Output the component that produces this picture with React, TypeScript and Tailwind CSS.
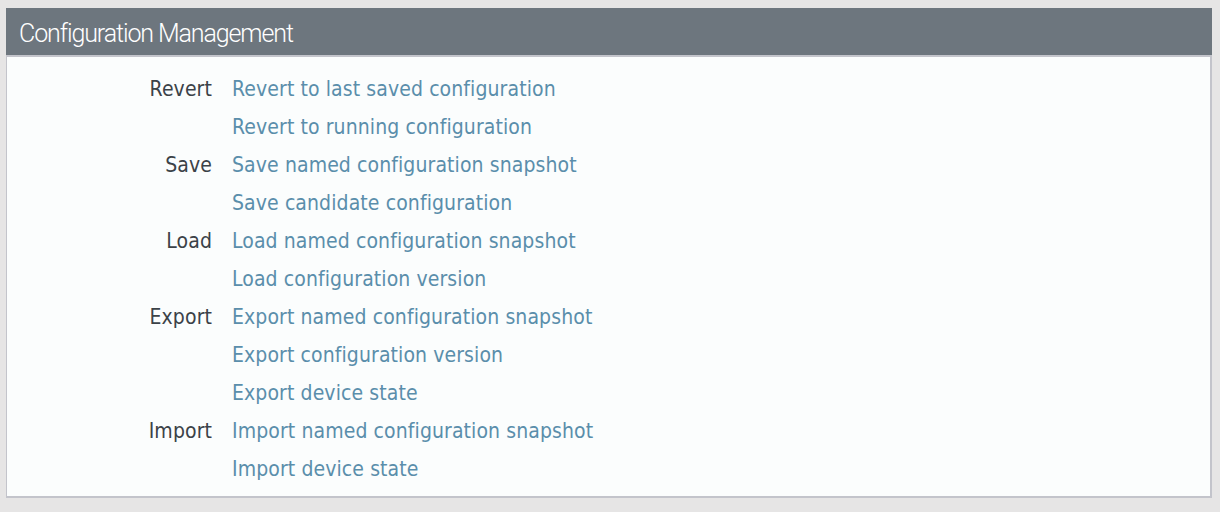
const groups = [
  { label: "Revert", links: ["Revert to last saved configuration", "Revert to running configuration"] },
  { label: "Save", links: ["Save named configuration snapshot", "Save candidate configuration"] },
  { label: "Load", links: ["Load named configuration snapshot", "Load configuration version"] },
  { label: "Export", links: ["Export named configuration snapshot", "Export configuration version", "Export device state"] },
  { label: "Import", links: ["Import named configuration snapshot", "Import device state"] },
];

export default function App() {
  return (
    <div className="min-h-[512px] w-[1220px] bg-[#e6e5e5] pt-2 pl-[6px] pr-2">
      <div className="w-[1206px]">
        <div className="h-[47px] bg-[#6d767e] pl-[13px] pt-[4px] flex items-center">
          <h1 className="text-white text-[25px] font-light tracking-[-1.1px] font-['Roboto',sans-serif] leading-none">
            Configuration Management
          </h1>
        </div>
        <div className="bg-[#fbfdfd] border-t-2 border-l border-r-2 border-b-2 border-[#c3c4cb] pt-[14px] pb-[7px] font-['DejaVu_Sans_Condensed','DejaVu_Sans',sans-serif] text-[21px] tracking-[0.1px]">
          {groups.map((g) =>
            g.links.map((link, i) => (
              <div key={link} className="flex h-[38px] items-center">
                <div className="w-[205px] text-right text-[#3b4248]">{i === 0 ? g.label : ""}</div>
                <a href="#" className="ml-[20px] text-[#5a8eab]">
                  {link}
                </a>
              </div>
            ))
          )}
        </div>
      </div>
    </div>
  );
}
